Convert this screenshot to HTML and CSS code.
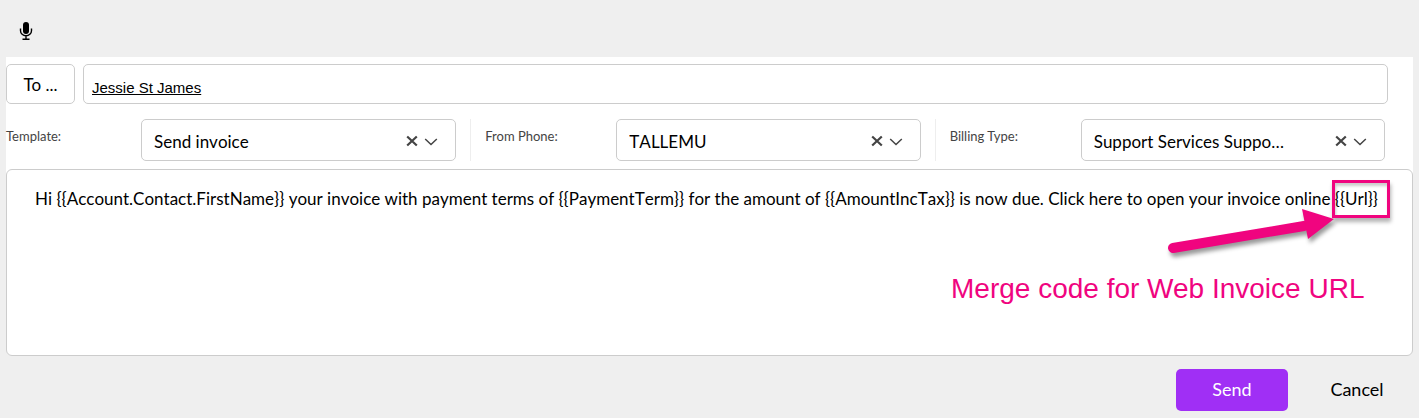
FILE: index.html
```html
<!DOCTYPE html>
<html lang="en">
<head>
<meta charset="utf-8">
<title>Send message</title>
<link rel="stylesheet" href="styles.css">
</head>
<body>
<form class="composer">
  <div class="toolbar">
    <button class="mic" type="button" aria-label="Dictate">
      <svg viewBox="0 0 14 20" width="14" height="20"><rect x="4" y="1" width="6" height="12" rx="3"/><path d="M1.500 7.500v2.300a5.500 5 0 0 0 11 0V7.500M7 15v3M3.500 18.200h7" fill="none" stroke="#000" stroke-width="1.400"/></svg>
    </button>
  </div>
  <div class="panel">
    <div class="recipients">
      <button class="to" type="button">To ...</button>
      <div class="recipient-list"><a class="recipient" href="#">Jessie St James</a></div>
    </div>
    <div class="fields">
      <div class="field">
        <label class="label" for="template">Template:</label>
        <div class="picker">
          <select class="select" id="template"><option>Send invoice</option></select>
          <button class="clear" type="button" aria-label="Clear template"><svg viewBox="0 0 12 12" width="12" height="12"><path d="M1.200 1.500l9.600 9M10.800 1.500l-9.600 9"/></svg></button>
          <svg class="chevron" viewBox="0 0 14 8" width="14" height="8"><path d="M1.200 1L7 6.500 12.800 1"/></svg>
        </div>
      </div>
      <div class="field">
        <label class="label" for="phone">From Phone:</label>
        <div class="picker">
          <select class="select" id="phone"><option>TALLEMU</option></select>
          <button class="clear" type="button" aria-label="Clear phone"><svg viewBox="0 0 12 12" width="12" height="12"><path d="M1.200 1.500l9.600 9M10.800 1.500l-9.600 9"/></svg></button>
          <svg class="chevron" viewBox="0 0 14 8" width="14" height="8"><path d="M1.200 1L7 6.500 12.800 1"/></svg>
        </div>
      </div>
      <div class="field">
        <label class="label" for="billing">Billing Type:</label>
        <div class="picker">
          <select class="select" id="billing"><option>Support Services Suppo…</option></select>
          <button class="clear" type="button" aria-label="Clear billing type"><svg viewBox="0 0 12 12" width="12" height="12"><path d="M1.200 1.500l9.600 9M10.800 1.500l-9.600 9"/></svg></button>
          <svg class="chevron" viewBox="0 0 14 8" width="14" height="8"><path d="M1.200 1L7 6.500 12.800 1"/></svg>
        </div>
      </div>
    </div>
  </div>
  <div class="message">
    <textarea class="body" aria-label="Message">Hi {{Account.Contact.FirstName}} your invoice with payment terms of {{PaymentTerm}} for the amount of {{AmountIncTax}} is now due. Click here to open your invoice online {{Url}}</textarea>
    <div class="highlight"></div>
    <svg class="arrow" viewBox="0 0 180 60" width="180" height="60"><path d="M9 39L140 17" stroke="#f0047f" stroke-width="10" stroke-linecap="round"/><path d="M138 0L170 10 144 30z" fill="#f0047f"/></svg>
    <div class="note">Merge code for Web Invoice URL</div>
  </div>
  <div class="actions">
    <button class="send" type="submit">Send</button>
    <button class="cancel" type="button">Cancel</button>
  </div>
</form>
</body>
</html>
```
FILE: styles.css
```css
* {
  box-sizing: border-box;
}

body {
  margin: 0;
  background: #efefef;
  color: #000;
  font: 18px/24px Lato, sans-serif;
}

button,
select,
textarea {
  margin: 0;
  font: inherit;
  color: inherit;
}

.composer {
  padding: 0 6px;
}

.toolbar {
  display: flex;
  align-items: center;
  height: 57px;
  padding: 4px 13px 0;
}

.mic {
  display: flex;
  padding: 0;
  border: 0;
  background: none;
}

.panel {
  background: #fff;
}

.recipients {
  display: flex;
  gap: 8px;
  padding: 7px 25px 0 0;
}

.to {
  width: 69px;
  height: 40px;
  padding: 1px 0 0;
  border: 1px solid #ccc;
  border-radius: 5px;
  background: #fff;
  font-size: 17px;
}

.recipient-list {
  display: flex;
  flex: 1;
  align-items: center;
  padding: 8px 8px 0;
  border: 1px solid #ccc;
  border-radius: 5px;
}

.recipient {
  color: #000;
  font: 15px/20px "Liberation Sans", Arial, sans-serif;
}

.fields {
  display: grid;
  grid-template-columns: repeat(3, 1fr);
  padding: 15px 14px 8px 0;
}

.field {
  display: flex;
  padding-right: 14px;
}

.field + .field {
  padding-left: 14px;
  border-left: 1px solid #eee;
}

.label {
  width: 135px;
  padding-top: 7px;
  color: #444;
  font-size: 13px;
  line-height: 20px;
}

.field + .field .label {
  width: 131px;
}

.picker {
  position: relative;
  flex: 1;
}

.select {
  display: block;
  width: 100%;
  height: 42px;
  padding: 3px 56px 0 12px;
  border: 1px solid #ccc;
  border-radius: 5px;
  background: #fff;
  font-size: 17px;
  font-kerning: none;
  appearance: none;
}

.clear {
  position: absolute;
  top: 16px;
  right: 38px;
  display: flex;
  padding: 0;
  border: 0;
  background: none;
}

.clear path {
  stroke: #444;
  stroke-width: 2.2;
}

.chevron {
  position: absolute;
  top: 19px;
  right: 18px;
  pointer-events: none;
}

.chevron path {
  fill: none;
  stroke: #444;
  stroke-width: 1.5;
}

.message {
  position: relative;
  background: linear-gradient(#fff 10px, transparent 10px);
}

.body {
  display: block;
  width: 100%;
  height: 187px;
  padding: 17px 16px 17px 28px;
  border: 1px solid #ccc;
  border-radius: 6px;
  background: #fff;
  font-size: 17px;
  font-kerning: none;
  resize: none;
  outline: none;
}

.highlight {
  position: absolute;
  top: 11px;
  left: 1326px;
  width: 58px;
  height: 38px;
  border: 3px solid #f0047f;
  box-shadow: 1px 4px 4px rgba(0, 0, 0, 0.3), inset 1px 3px 3px rgba(0, 0, 0, 0.2);
  pointer-events: none;
}

.arrow {
  position: absolute;
  top: 40px;
  left: 1158px;
  overflow: visible;
  filter: drop-shadow(2px 4px 2px rgba(0, 0, 0, 0.4));
  pointer-events: none;
}

.note {
  position: absolute;
  top: 104px;
  left: 945px;
  color: #f0047f;
  font: 28px/32px "Liberation Sans", Arial, sans-serif;
  white-space: nowrap;
  pointer-events: none;
}

.actions {
  display: flex;
  justify-content: flex-end;
  gap: 13px;
  padding: 13px 0 7px;
}

.send,
.cancel {
  width: 112px;
  height: 42px;
  padding: 0 0 2px;
  border: 0;
  border-radius: 5px;
}

.send {
  background: #a02ff5;
  color: #fff;
}

.cancel {
  background: none;
}
```
